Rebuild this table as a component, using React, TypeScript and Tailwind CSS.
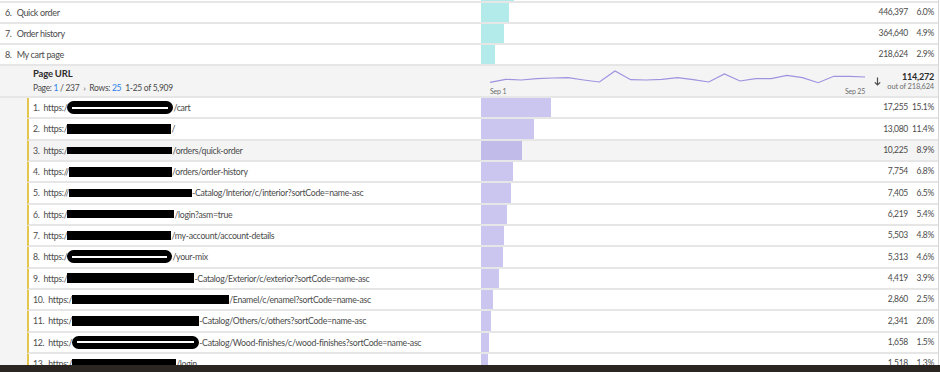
import React from "react";

type TopRow = { n: string; label: string; bar: number; v: string; p: string };
type SubRow = {
  n: string;
  pre: string;
  red: number;
  rh: number;
  pill?: boolean;
  suf: string;
  bar: number;
  v: string;
  p: string;
  hover?: boolean;
};

const topRows: TopRow[] = [
  { n: "6.", label: "Quick order", bar: 28, v: "446,397", p: "6.0%" },
  { n: "7.", label: "Order history", bar: 23, v: "364,640", p: "4.9%" },
  { n: "8.", label: "My cart page", bar: 14, v: "218,624", p: "2.9%" },
];

const subRows: SubRow[] = [
  { n: "1.", pre: "https:/", red: 106, rh: 13, pill: true, suf: "/cart", bar: 70, v: "17,255", p: "15.1%" },
  { n: "2.", pre: "https:/", red: 104, rh: 10, suf: "/", bar: 53, v: "13,080", p: "11.4%" },
  { n: "3.", pre: "https:/", red: 105, rh: 7, suf: "/orders/quick-order", bar: 41, v: "10,225", p: "8.9%", hover: true },
  { n: "4.", pre: "https://", red: 103, rh: 10, suf: "/orders/order-history", bar: 32, v: "7,754", p: "6.8%" },
  { n: "5.", pre: "https://", red: 123, rh: 8, suf: "-Catalog/Interior/c/interior?sortCode=name-asc", bar: 30, v: "7,405", p: "6.5%" },
  { n: "6.", pre: "https:/", red: 107, rh: 8, suf: "/login?asm=true", bar: 26, v: "6,219", p: "5.4%" },
  { n: "7.", pre: "https:/", red: 104, rh: 9, suf: "/my-account/account-details", bar: 23, v: "5,503", p: "4.8%" },
  { n: "8.", pre: "https:/", red: 105, rh: 13, pill: true, suf: "/your-mix", bar: 22, v: "5,313", p: "4.6%" },
  { n: "9.", pre: "https:/", red: 127, rh: 10, suf: "-Catalog/Exterior/c/exterior?sortCode=name-asc", bar: 18, v: "4,419", p: "3.9%" },
  { n: "10.", pre: "https:/", red: 157, rh: 9, suf: "/Enamel/c/enamel?sortCode=name-asc", bar: 12, v: "2,860", p: "2.5%" },
  { n: "11.", pre: "https:/", red: 127, rh: 10, suf: "-Catalog/Others/c/others?sortCode=name-asc", bar: 10, v: "2,341", p: "2.0%" },
  { n: "12.", pre: "https:/", red: 127, rh: 13, pill: true, suf: "-Catalog/Wood-finishes/c/wood-finishes?sortCode=name-asc", bar: 8, v: "1,658", p: "1.5%" },
  { n: "13.", pre: "https:/", red: 104, rh: 9, suf: "/login", bar: 7, v: "1,518", p: "1.3%" },
];

const spark = [
  15.3, 12.3, 13, 11.7, 11, 10.7, 13, 15, 4, 12.7, 13, 12.3, 10.7, 12.7, 15, 7, 14, 11.7, 11.7, 8.3, 10.7, 15.7, 9.3, 9.3, 10,
];
const sparkPts = spark.map((y, i) => `${(i * 15.625).toFixed(2)},${y}`).join(" ");

function Nums({ v, p }: { v: string; p: string }) {
  return (
    <div className="flex items-center text-[8.5px] tracking-[-0.3px] text-[#4b4b4b] pr-[4px]">
      <span className="text-right">{v}</span>
      <span className="w-[26px] text-right">{p}</span>
    </div>
  );
}

export default function App() {
  return (
    <div
      className="w-[940px] h-[372px] overflow-hidden bg-white flex flex-col"
      style={{ fontFamily: "Lato, 'Open Sans', sans-serif" }}
    >
      <div className="h-[365px] overflow-hidden w-[939px] border-r border-[#d6d6d6] flex flex-col">
        {/* partial row above */}
        <div className="h-[1px] shrink-0 flex border-b-2 border-[#e6e6e6] box-content">
          <div className="w-[481px]" />
          <div className="h-full bg-[#b3ebeb] w-[33px]" />
        </div>
        {topRows.map((r) => (
          <div key={r.n} className="h-[21px] shrink-0 flex items-stretch border-b-2 border-[#e6e6e6] box-border">
            <div className="w-[481px] flex items-center pl-[5px] text-[9px] tracking-[-0.35px] text-[#4b4b4b]">
              <span className="mr-[5px]">{r.n}</span>
              <span>{r.label}</span>
            </div>
            <div className="flex-1 flex items-stretch">
              <div className="bg-[#b3ebeb]" style={{ width: r.bar }} />
              <div className="flex-1" />
              <Nums v={r.v} p={r.p} />
            </div>
          </div>
        ))}
        {/* breakdown header */}
        <div className="h-[32px] shrink-0 flex bg-[#f4f4f4] border-b-2 border-[#e6e6e6] box-border">
          <div className="w-[481px] pl-[33px] pt-[1px] flex flex-col">
            <span className="text-[9.5px] font-bold text-[#2c2c2c] leading-[14px] tracking-[-0.2px]">Page URL</span>
            <span className="text-[8.5px] tracking-[-0.3px] text-[#4b4b4b] leading-[14px] flex items-center gap-[4px]">
              <span>
                Page: <span className="text-[#2680eb]">1</span> / 237
              </span>
              <span className="text-[8px]">›</span>
              <span>
                Rows: <span className="text-[#2680eb]">25</span>
              </span>
              <span>1-25 of 5,909</span>
            </span>
          </div>
          <div className="flex-1 flex">
            <div className="ml-[9px] w-[375px] flex flex-col pt-[1px]">
              <svg width="375" height="20" viewBox="0 0 375 20" className="overflow-visible">
                <polyline points={sparkPts} fill="none" stroke="#9d93e0" strokeWidth="1.2" />
              </svg>
              <div className="flex justify-between text-[7px] text-[#6e6e6e] leading-[8px] tracking-[-0.2px]">
                <span>Sep 1</span>
                <span>Sep 25</span>
              </div>
            </div>
            <div className="flex-1 flex items-center justify-center pl-[2px]">
              <svg width="7" height="9" viewBox="0 0 7 9">
                <path d="M3.5 0.5 V8 M0.8 5.3 L3.5 8 L6.2 5.3" fill="none" stroke="#4b4b4b" strokeWidth="1.2" />
              </svg>
            </div>
            <div className="flex flex-col items-end justify-center pr-[4px]">
              <span className="text-[9px] font-bold text-[#2c2c2c] leading-[11px] tracking-[-0.2px]">114,272</span>
              <span className="text-[7.5px] text-[#6e6e6e] leading-[10px] tracking-[-0.2px]">out of 218,624</span>
            </div>
          </div>
        </div>
        {/* sub rows */}
        {subRows.map((r) => (
          <div key={r.n} className="h-[21.33px] shrink-0 flex items-stretch">
            <div className="w-[27px] bg-[#f4f4f4]" />
            <div
              className={`flex-1 flex items-stretch border-l-2 border-l-[#e5c64c] border-b-2 border-b-[#e6e6e6] ${
                r.hover ? "bg-[#f4f4f4]" : "bg-white"
              }`}
            >
              <div className="w-[452px] flex items-center pl-[4px] text-[8.75px] tracking-[-0.3px] text-[#4b4b4b] whitespace-nowrap">
                <span className="mr-[4px]">{r.n}</span>
                <span>{r.pre}</span>
                <span
                  className={`inline-flex items-center justify-center bg-black ${r.pill ? "rounded-full" : ""}`}
                  style={{ width: r.red, height: r.rh }}
                >
                  {r.pill ? <span className="block h-[2px] bg-white" style={{ width: r.red - 10 }} /> : null}
                </span>
                <span>{r.suf}</span>
              </div>
              <div className="flex-1 flex items-stretch">
                <div className={r.hover ? "bg-[#c0bbe8]" : "bg-[#cac6ef]"} style={{ width: r.bar }} />
                <div className="flex-1" />
                <Nums v={r.v} p={r.p} />
              </div>
            </div>
          </div>
        ))}
      </div>
      <div className="h-[7px] bg-[#2b2621] shrink-0" />
    </div>
  );
}
